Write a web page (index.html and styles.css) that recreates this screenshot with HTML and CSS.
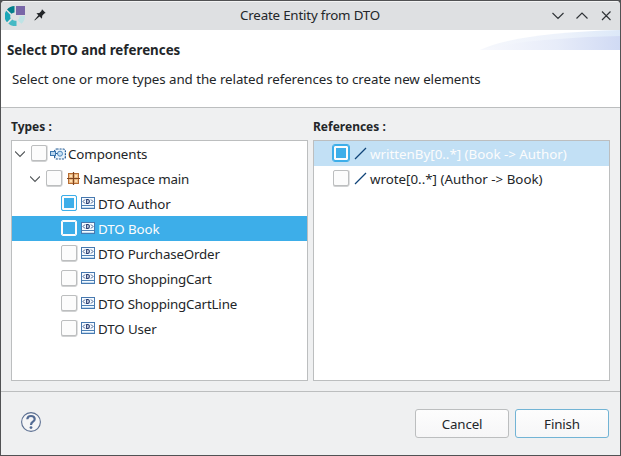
FILE: index.html
```html
<!DOCTYPE html>
<html lang="en">
<head>
<meta charset="utf-8">
<title>Create Entity from DTO</title>
<link rel="stylesheet" href="styles.css">
</head>
<body>
<svg class="defs" width="0" height="0">
  <symbol id="dto" viewBox="0 0 16 16">
    <rect x="1.500" y="1.500" width="13" height="11" fill="#f5faff" stroke="#4779b0"/>
    <path d="M2 9.500h12" stroke="#4d80b5"/><path d="M2 11.500h12" stroke="#c4dcf1"/>
    <path d="M5 3.500l-2 2 2 2M11 3.500l2 2-2 2" fill="none" stroke="#3d5788"/>
    <path d="M6.700 3.500v4h1q1.600 0 1.600-2t-1.600-2z" fill="none" stroke="#24386e" stroke-width="1.200"/>
  </symbol>
  <symbol id="down" viewBox="0 0 10 16"><path d="M0 5.500l5 5 5-5" fill="none" stroke="#54585b" stroke-width="1.150"/></symbol>
  <symbol id="line" viewBox="0 0 16 16"><path d="M3 13L14 2" stroke="#0f4478" stroke-width="1.300"/></symbol>
</svg>
<div class="window">
  <header class="titlebar">
    <svg class="logo" width="20" height="20" viewBox="0 0 20 20">
      <path d="M9.500 0v6.500Q7.500 6.800 6.500 7.700L2 3.500Q4.800 0 9.500 0z" fill="#037f8c"/>
      <path d="M1.200 4.700L5.500 9a5 5 0 0 0 .2 3.600L2 16.300A10 10 0 0 1 1.200 4.700z" fill="#1ba6b8"/>
      <path d="M3.300 17.500l4-4a5 5 0 0 0 4.200 1.200V20a10 10 0 0 1-8.200-2.500z" fill="#45b9c4"/>
      <path d="M12.500 14.300q2-1.300 2.200-4.300H20a10 10 0 0 1-3.500 7.700z" fill="#bee3e5"/>
      <path d="M11 0h9v9h-9z" fill="#7867a8"/>
    </svg>
    <svg class="pin" width="12" height="12" viewBox="0 0 12 12"><path d="M8 .3L11.700 4l-1.500.5-2 2.200-.2 3L5.500 7.500.8 11.500.4 11l4-4.700L2.400 4.200l3-.3 2-2z" fill="#232629"/></svg>
    <span class="title">Create Entity from DTO</span>
    <svg class="controls" width="60" height="12" viewBox="0 0 60 12" fill="none" stroke="#303438" stroke-width="1.150">
      <path d="M.5 3l5.500 5.500L11.500 3M24.500 8.500L30 3l5.500 5.500M50 1.500l8.500 8.500M58.500 1.500L50 10"/>
    </svg>
  </header>
  <section class="banner">
    <svg class="swoosh" width="140" height="20" viewBox="0 0 140 20">
      <defs>
        <linearGradient id="g1"><stop offset="0" stop-color="#f5f7fc"/><stop offset=".6" stop-color="#edf2fb"/><stop offset="1" stop-color="#dce8f8"/></linearGradient>
        <linearGradient id="g2"><stop offset="0" stop-color="#f8f9fd"/><stop offset=".55" stop-color="#e7ecf9"/><stop offset="1" stop-color="#d0daf4"/></linearGradient>
      </defs>
      <path d="M0 20Q35 3 140 0v20z" fill="url(#g1)"/>
      <path d="M0 20Q50 8 140 6v14z" fill="url(#g2)"/>
    </svg>
    <h1>Select DTO and references</h1>
    <p>Select one or more types and the related references to create new elements</p>
  </section>
  <main class="content">
    <section class="pane">
      <h2>Types :</h2>
      <div class="tree">
        <div class="row"><svg class="arrow"><use href="#down"/></svg><i class="check"></i>
          <svg class="icon" viewBox="0 0 16 16"><rect x="4.600" y="3" width="10.800" height="10" rx="2" fill="#e9f3fb" stroke="#225a94" stroke-width="1.200" stroke-dasharray="2 1"/><rect x=".5" y="5.500" width="5" height="4" fill="#b9d6ee" stroke="#3b76ae"/><circle cx="10" cy="7.700" r="2.500" fill="#c8e1f5" stroke="#4d88bd"/><path d="M6 7.500h1.500" stroke="#225a94"/></svg>
          <span>Components</span></div>
        <div class="row level1"><svg class="arrow"><use href="#down"/></svg><i class="check"></i>
          <svg class="icon" viewBox="0 0 16 16"><rect x="3.500" y="2.500" width="10" height="10" fill="#edb982" stroke="#b66c32"/><path d="M8.500 1v13M2 7.500h13" stroke="#7f451f" stroke-width="1.200"/><path d="M5 4h2v2H5zM10 4h2v2h-2zM5 9h2v2H5zM10 9h2v2h-2z" fill="#ffe0b2"/></svg>
          <span class="tight">Namespace main</span></div>
        <div class="row level2"><i class="check on"></i><svg class="icon"><use href="#dto"/></svg><span>DTO Author</span></div>
        <div class="row level2 selected"><i class="check on"></i><svg class="icon"><use href="#dto"/></svg><span>DTO Book</span></div>
        <div class="row level2"><i class="check"></i><svg class="icon"><use href="#dto"/></svg><span class="tight">DTO PurchaseOrder</span></div>
        <div class="row level2"><i class="check"></i><svg class="icon"><use href="#dto"/></svg><span class="tight">DTO ShoppingCart</span></div>
        <div class="row level2"><i class="check"></i><svg class="icon"><use href="#dto"/></svg><span class="tight">DTO ShoppingCartLine</span></div>
        <div class="row level2"><i class="check"></i><svg class="icon"><use href="#dto"/></svg><span>DTO User</span></div>
      </div>
    </section>
    <section class="pane">
      <h2>References :</h2>
      <div class="tree">
        <div class="row ref hovered"><i class="check on"></i><svg class="icon"><use href="#line"/></svg><span>writtenBy[0..*] (Book -&gt; Author)</span></div>
        <div class="row ref"><i class="check"></i><svg class="icon"><use href="#line"/></svg><span>wrote[0..*] (Author -&gt; Book)</span></div>
      </div>
    </section>
  </main>
  <footer class="footer">
    <svg class="help" width="20" height="20" viewBox="0 0 20 20"><circle cx="10" cy="10" r="9.400" fill="#f5f5f6" stroke="#5b6f91" stroke-width="1.100"/><path d="M6.300 7.200Q6.500 4 10 4t3.700 3q0 1.500-1.800 2.700Q10 10.800 10 13" fill="none" stroke="#536b93" stroke-width="2.200"/><circle cx="10" cy="15.600" r="1.400" fill="#536b93"/></svg>
    <button type="button">Cancel</button>
    <button type="button" class="primary">Finish</button>
  </footer>
</div>
</body>
</html>
```
FILE: styles.css
```css
* { box-sizing: border-box; }
body {
  margin: 0;
  height: 456px;
  padding: 1px;
  overflow: hidden;
  background: #515254;
  color: #232629;
  font: 13.333px/18px "Noto Sans", sans-serif;
}
.defs { position: absolute; }
svg { display: block; flex: none; }
.window {
  display: flex;
  flex-direction: column;
  width: 619px;
  height: 454px;
  overflow: hidden;
  background: #eff0f1;
  border-radius: 4px 4px 0 0;
}
.titlebar {
  display: flex;
  align-items: center;
  height: 29px;
  padding: 0 8px 0 4px;
  background: #dee0e2;
  border-top: 1px solid #f3f4f4;
}
.logo { margin-top: -1px; }
.pin { margin: -2px 0 0 9px; }
.controls { margin-top: -1px; }
.title {
  flex: 1;
  padding: 0 0 2px 22px;
  text-align: center;
  letter-spacing: -0.19px;
}
.banner {
  position: relative;
  height: 78px;
  padding: 11px 6px 0;
  background: #fff;
  border-bottom: 1px solid #bcbebf;
}
.swoosh { position: absolute; top: 0; right: 0; }
h1, h2, p { margin: 0; }
h1 { position: relative; font-size: 13.333px; line-height: 18px; font-weight: 700; }
h2 { font-size: 12px; line-height: 18px; font-weight: 700; }
.banner p { margin: 11px 0 0 5px; letter-spacing: -0.067px; }
.content {
  display: flex;
  gap: 5px;
  height: 283px;
  padding: 10px 10px 0;
}
.pane { width: 297px; }
.tree {
  height: 241px;
  margin-top: 4px;
  background: #fff;
  border: 1px solid #bcbebf;
}
.row {
  display: flex;
  align-items: center;
  height: 25px;
  padding-left: 3px;
  white-space: nowrap;
}
.row span { letter-spacing: -0.1px; }
.row span.tight { letter-spacing: -0.18px; }
.ref span { letter-spacing: 0; }
.level1 { padding-left: 18px; }
.level2 { padding-left: 49px; }
.ref { padding-left: 19px; }
.row.ref span { letter-spacing: 0; }
.arrow { width: 10px; height: 16px; margin-right: 6px; }
.icon { width: 16px; height: 16px; margin: 0 2px 0 3px; }
.check {
  flex: none;
  width: 16px;
  height: 16px;
  margin-top: -1px;
  background: #fcfcfc;
  border: 1px solid #bcbebf;
  border-radius: 2px;
  box-shadow: 0 1px 0 #d0d1d2, 1px 0 0 #dfe0e1;
}
.check.on {
  border-color: #3daee9;
  background: #3daee9;
  box-shadow: inset 0 0 0 2px #fcfcfc;
}
.selected { background: #3daee9; color: #fcfcfc; }
.selected .check.on { border-color: #fcfcfc; box-shadow: inset 0 0 0 1px #fcfcfc; }
.hovered { background: #c2e0f5; color: #fcfcfc; }
.hovered .check { outline: 1px solid #3daee9; }
.footer {
  display: flex;
  align-items: flex-start;
  gap: 6px;
  flex: 1;
  padding: 17px 11px 0 20px;
  border-top: 1px solid #bcbebf;
}
.help { margin: 3px auto 0 0; }
button {
  width: 94px;
  height: 29px;
  padding: 0;
  font: inherit;
  letter-spacing: -0.15px;
  color: inherit;
  background: linear-gradient(#fdfdfd, #f6f6f7);
  border: 1px solid #bcbebf;
  border-radius: 3px;
}
.primary { border-color: #72b4d5; }
```
